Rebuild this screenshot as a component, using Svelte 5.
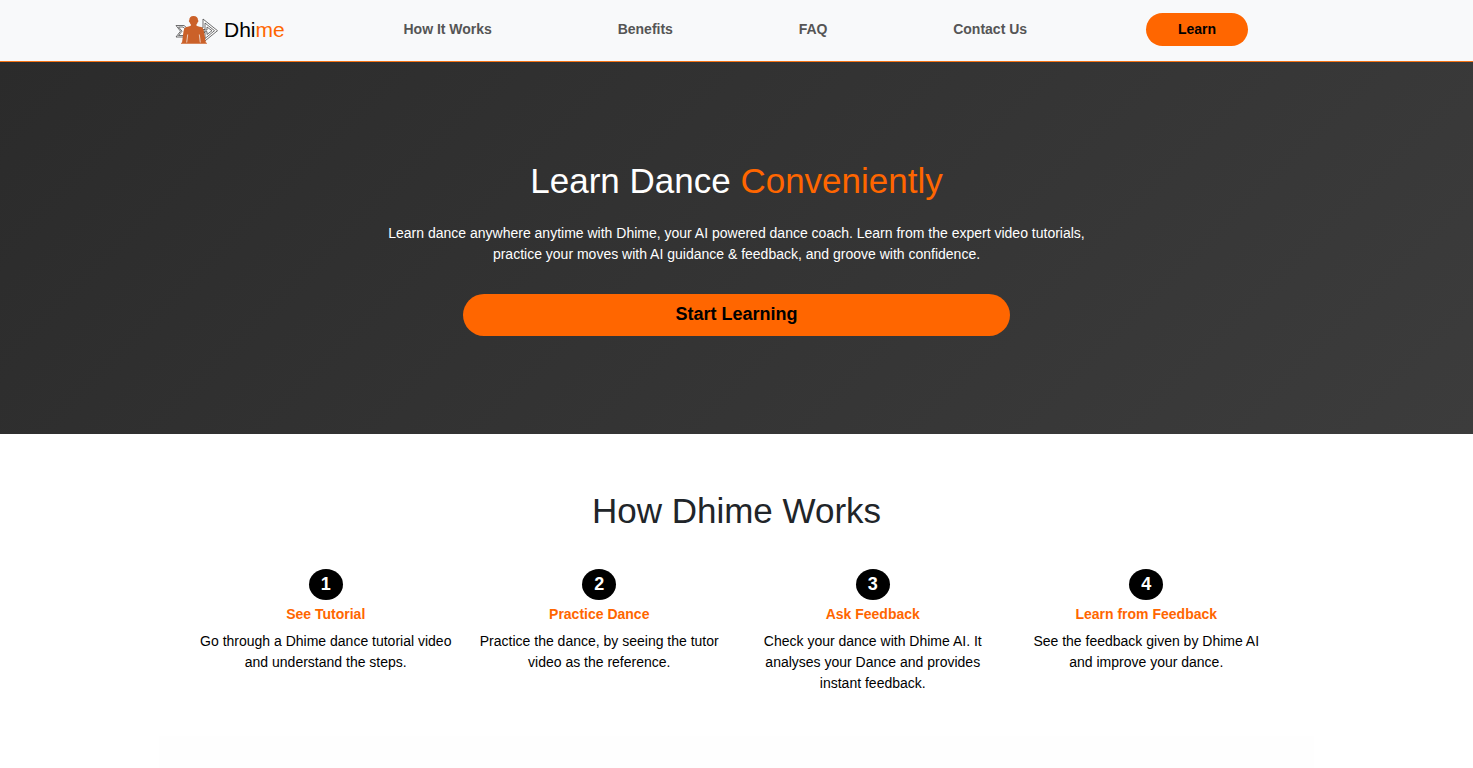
<script>
  const links = [
    { label: 'How It Works', href: '#how-it-works' },
    { label: 'Benefits', href: '#benefits' },
    { label: 'FAQ', href: '#faq' },
    { label: 'Contact Us', href: '#contact' },
  ];

  const steps = [
    {
      title: 'See Tutorial',
      text: 'Go through a Dhime dance tutorial video and understand the steps.',
    },
    {
      title: 'Practice Dance',
      text: 'Practice the dance, by seeing the tutor video as the reference.',
    },
    {
      title: 'Ask Feedback',
      text: 'Check your dance with Dhime AI. It analyses your Dance and provides instant feedback.',
    },
    {
      title: 'Learn from Feedback',
      text: 'See the feedback given by Dhime AI and improve your dance.',
    },
  ];
</script>

<header>
  <nav>
    <a class="brand" href="#home">
      <svg width="43" height="30" viewBox="0 0 43 30" aria-hidden="true">
        <g fill="#fdfdfd" stroke="#4a4a4a" stroke-width="0.8">
          <path d="M1 10.500h8l3 2.500h16V4l14.500 11.700L28 27.500v-8H12l-3 2.500H1l4.500-5.800z" />
          <path d="M3.500 12h4.500l3 2.500h19V8l9.500 7.700L30 23.500V17.500H11L8 20.500H3.500l3.500-4.300z" />
          <path d="M25 15h7v-3l5 3.700-5 3.800v-2.800h-7z" />
        </g>
        <path
          fill="#cb6129"
          d="M18.500 1c3 0 4.600 1.700 4.500 4.200 0.700 0.200 0.500 1.700-0.300 2-0.200 1-0.700 1.700-1.200 2.100v1.500c1.600 1 4.500 0.900 5.900 2 1.200 1 1.400 3.400 1.900 6l1.600 9h1v0.900H6v-0.900h1l1.200-9c0.400-2.600 0.600-5 1.800-6 1.400-1.100 4.200-1 5.800-2V9.300c-0.500-0.400-1-1.100-1.200-2.100-0.800-0.300-1-1.800-0.300-2C14.200 2.700 15.500 1 18.500 1z"
        />
        <path fill="none" stroke="#f8f9fa" stroke-width="0.7" d="M11.700 27.500l1-8M25.300 27.500l-1-8" />
      </svg>
      <span class="name">Dhi<span class="accent">me</span></span>
    </a>
    {#each links as link}
      <a class="link" href={link.href}>{link.label}</a>
    {/each}
    <button class="learn">Learn</button>
  </nav>
</header>

<main>
  <section class="hero" id="home">
    <h1>Learn Dance <span class="accent">Conveniently</span></h1>
    <p>
      Learn dance anywhere anytime with Dhime, your AI powered dance coach. Learn from the expert
      video tutorials, practice your moves with AI guidance &amp; feedback, and groove with
      confidence.
    </p>
    <button class="start">Start Learning</button>
  </section>

  <section class="how" id="how-it-works">
    <h2>How Dhime Works</h2>
    <div class="steps">
      {#each steps as step, i}
        <div class="step">
          <span class="number">{i + 1}</span>
          <h3>{step.title}</h3>
          <p>{step.text}</p>
        </div>
      {/each}
    </div>
  </section>

  <section class="benefits" id="benefits"></section>
</main>

<style>
  :global(body) {
    margin: 0;
    background: #fff;
    color: #212529;
    font-family: 'Liberation Sans', Arial, sans-serif;
    font-size: 14px;
    line-height: 21px;
  }

  h1,
  h2,
  h3,
  p {
    margin: 0;
  }

  button {
    border: none;
    background: #ff6600;
    color: #000;
    font-family: inherit;
    font-weight: bold;
    cursor: pointer;
  }

  .accent {
    color: #ff6600;
  }

  header {
    background: #f8f9fa;
    border-bottom: 1px solid #f47316;
  }

  nav {
    display: flex;
    justify-content: space-between;
    align-items: center;
    padding: 13px 225px 15px 175px;
  }

  .brand {
    display: flex;
    align-items: center;
    gap: 6px;
    color: #000;
    text-decoration: none;
  }

  .name {
    font-size: 21px;
    line-height: 32px;
  }

  .link {
    padding: 0 7px;
    color: #555;
    font-weight: bold;
    text-decoration: none;
  }

  .learn {
    padding: 6px 32px;
    border-radius: 18px;
    font-size: 14px;
    line-height: 21px;
  }

  .hero {
    display: flex;
    flex-direction: column;
    align-items: center;
    padding: 98px 16px;
    background: linear-gradient(135deg, #2b2b2b, #3c3c3c);
    color: #fff;
    text-align: center;
  }

  h1,
  h2 {
    font-size: 35px;
    font-weight: normal;
    line-height: 42px;
  }

  .hero p {
    max-width: 720px;
    margin: 21px 0 29px;
  }

  .start {
    width: 100%;
    max-width: 547px;
    padding: 7px 8px 9px;
    border-radius: 21px;
    font-size: 18px;
    line-height: 26px;
  }

  .how {
    max-width: 1094px;
    margin: 0 auto;
    padding: 56px 16px 42px;
    text-align: center;
  }

  .steps {
    display: grid;
    grid-template-columns: repeat(4, 1fr);
    margin-top: 37px;
  }

  .step {
    padding: 0 11px 0 10px;
    color: #000;
  }

  .number {
    display: inline-block;
    width: 34px;
    border-radius: 50%;
    background: #000;
    color: #fff;
    font-size: 18px;
    font-weight: bold;
    line-height: 31px;
  }

  h3 {
    margin: 4px 0 6px;
    color: #ff6600;
    font-size: 14px;
    line-height: 21px;
  }

  .benefits {
    max-width: 1155px;
    min-height: 32px;
    margin: 0 auto;
    background: #fefefe;
  }
</style>
